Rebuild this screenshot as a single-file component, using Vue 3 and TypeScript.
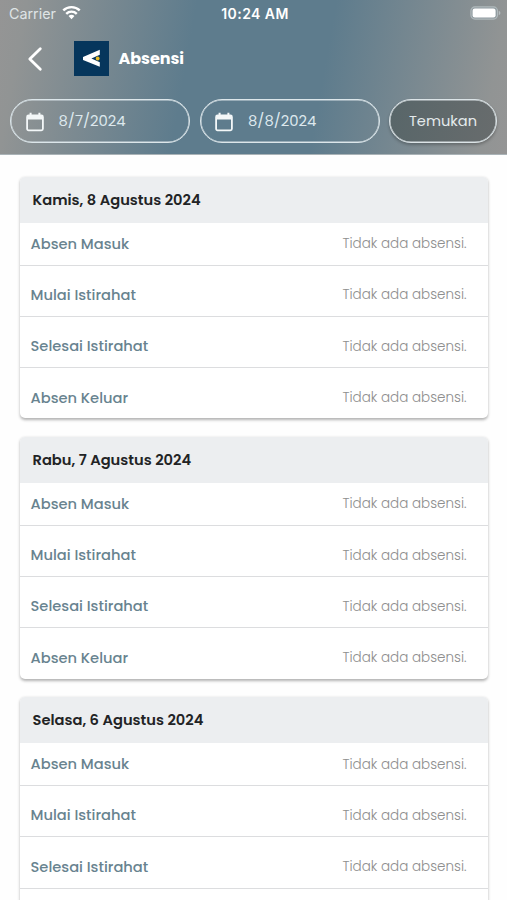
<script setup lang="ts">
interface Entry {
  label: string
  kind: string
}

const entries: Entry[] = [
  { label: 'Absen Masuk', kind: 'masuk' },
  { label: 'Mulai Istirahat', kind: 'mulai' },
  { label: 'Selesai Istirahat', kind: 'selesai' },
  { label: 'Absen Keluar', kind: 'keluar' },
]

const days: string[] = ['Kamis, 8 Agustus 2024', 'Rabu, 7 Agustus 2024', 'Selasa, 6 Agustus 2024']
const range: string[] = ['8/7/2024', '8/8/2024']

function rowsFor(index: number): Entry[] {
  return index === days.length - 1 ? entries.slice(0, 3) : entries
}
</script>

<template>
  <div class="screen">
    <header class="header">
      <div class="status">
        <div class="carrier">
          <span>Carrier</span>
          <svg class="wifi" viewBox="0 0 18 14" width="19" height="15">
            <path d="M1.200 5.100a11.200 11.200 0 0 1 15.600 0" />
            <path d="M4 8.200a7.200 7.200 0 0 1 10 0" />
            <path class="dot" d="M6.200 10.400a4.100 4.100 0 0 1 5.600 0L9 13.400z" />
          </svg>
        </div>
        <span class="time">10:24 AM</span>
        <svg class="battery" viewBox="0 0 31 14" width="31" height="14">
          <rect class="shell" x="0.900" y="0.900" width="26.600" height="12.200" rx="4" />
          <rect x="2.600" y="2.600" width="23" height="8.800" rx="2.200" fill="#fff" />
          <path class="tip" d="M28.800 5v4c1.200-.4 1.600-1.200 1.600-2s-.4-1.600-1.600-2z" />
        </svg>
      </div>
      <div class="title-bar">
        <svg class="back" viewBox="0 0 16 26" width="16" height="26">
          <path d="M13.300 2.700 2.800 13l10.500 10.300" />
        </svg>
        <svg class="logo" viewBox="0 0 35 35" width="35" height="35">
          <rect width="35" height="35" fill="#06365c" />
          <path d="M25.800 8.800v5l-8.400 3.700 8.400 3.700v4.600L9 19v-3z" fill="#fff" />
          <circle cx="23.700" cy="17.500" r="1.900" fill="#e9bd26" />
        </svg>
        <h1>Absensi</h1>
      </div>
      <div class="filters">
        <div v-for="date in range" :key="date" class="date">
          <svg class="calendar" viewBox="0 0 18 20" width="18" height="20">
            <path class="frame" d="M2.600 3.500h12.800a1.500 1.500 0 0 1 1.500 1.500v11.800a1.500 1.500 0 0 1-1.500 1.500H2.600a1.500 1.500 0 0 1-1.500-1.500V5a1.500 1.500 0 0 1 1.500-1.500z" />
            <path class="top" d="M1 7.400V4.500c0-1 .7-1.600 1.600-1.600h1V.8h2v2.100h6.800V.8h2v2.100h1c1 0 1.600.7 1.600 1.600v2.900z" />
          </svg>
          <span>{{ date }}</span>
        </div>
        <button class="find" type="button"><span>Temukan</span></button>
      </div>
    </header>
    <main class="list">
      <section v-for="(day, index) in days" :key="day" class="card">
        <h2>{{ day }}</h2>
        <div v-for="entry in rowsFor(index)" :key="entry.kind" class="row">
          <span class="label">{{ entry.label }}</span>
          <span class="value">Tidak ada absensi.</span>
        </div>
        <div v-if="index === days.length - 1" class="row"></div>
      </section>
    </main>
  </div>
</template>

<style>
body {
  margin: 0;
  overflow: hidden;
}
</style>

<style scoped>
.screen {
  width: 507px;
  height: 900px;
  overflow: hidden;
  background: #fefefe;
  font-family: Poppins, Inter, sans-serif;
}
.header {
  height: 155px;
  box-sizing: border-box;
  border-bottom: 1px solid #aab3b7;
  background: linear-gradient(100deg, #959595 0%, #919494 5%, #5e7c8d 37%, #5e7c8d 63%, #919494 95%, #959595 100%);
  color: #fff;
}
.status {
  height: 28px;
  display: grid;
  grid-template-columns: 1fr auto 1fr;
  align-items: center;
  padding: 0 6px 0 9px;
  font-family: Inter, sans-serif;
}
.carrier {
  display: flex;
  align-items: center;
  gap: 6px;
  font-size: 14.300px;
  color: #dfe4e6;
}
.carrier span {
  margin-top: -2px;
}
.wifi {
  margin-top: -3px;
  fill: none;
  stroke: #fff;
  stroke-width: 2.300;
}
.wifi .dot {
  fill: #fff;
  stroke: none;
}
.time {
  margin-top: -2px;
  font-size: 14px;
  font-weight: 600;
  letter-spacing: 0.450px;
}
.battery {
  justify-self: end;
  margin-top: -2px;
}
.shell {
  fill: #8e999e;
  stroke: #b0b9bc;
  stroke-width: 1.200;
}
.tip {
  fill: #b4bdc0;
}
.title-bar {
  height: 61px;
  display: flex;
  align-items: center;
  padding-left: 27px;
}
.back {
  fill: none;
  stroke: #fff;
  stroke-width: 2.800;
  stroke-linecap: round;
  stroke-linejoin: round;
}
.logo {
  margin-left: 31px;
}
h1 {
  margin: 0 0 0 9.500px;
  font-size: 16px;
  font-weight: 700;
  letter-spacing: -0.050px;
}
.filters {
  display: flex;
  gap: 9.500px;
  padding: 10px 9px 0 10px;
}
.date {
  width: 180px;
  height: 44px;
  box-sizing: border-box;
  border: 1px solid #dce6ea;
  box-shadow: inset 0 0 0 0.500px #d3dee3;
  border-radius: 22px;
  display: flex;
  align-items: center;
  gap: 15px;
  padding: 0 0 0 14.500px;
  color: #dde8ed;
  font-size: 14.800px;
}
.calendar {
  margin-top: 1px;
}
.date span {
  margin-top: -1px;
}
.frame {
  fill: none;
  stroke: #f3f7f8;
  stroke-width: 1.800;
}
.top {
  fill: #f3f7f8;
}
.find {
  width: 108px;
  height: 44px;
  box-sizing: border-box;
  border: 1px solid #dce4e7;
  border-radius: 22px;
  background: linear-gradient(100deg, #586669, #686c6d);
  box-shadow: inset 0 0 0 0.500px #d5dcdf, 0 2px 3px rgba(0, 0, 0, 0.25);
  color: #e4eaec;
  font: 14.600px Poppins, Inter, sans-serif;
  padding: 0;
}
.list {
  display: flex;
  flex-direction: column;
  gap: 18.700px;
  padding: 22px 19px 0 20px;
}
.card {
  background: #fff;
  border-radius: 5px;
  box-shadow: 0 1.500px 3px rgba(0, 0, 0, 0.3);
}
h2 {
  margin: 0;
  height: 46px;
  padding-left: 12.500px;
  border-radius: 5px 5px 0 0;
  background: #eceef0;
  color: #222325;
  font-size: 14.660px;
  line-height: 46px;
  font-weight: 600;
}
.row {
  height: 51.300px;
  box-sizing: border-box;
  padding: 9.500px 21.500px 0 10.500px;
  display: flex;
  align-items: center;
  justify-content: space-between;
  border-top: 1.500px solid #dcdddf;
}
h2 + .row {
  height: 41.600px;
  padding-top: 1px;
  border-top: 0;
}
.label {
  color: #68838f;
  font-size: 14.660px;
  font-weight: 500;
}
.value {
  color: #8e8e8e;
  font-size: 13.500px;
  font-weight: 300;
}
</style>
